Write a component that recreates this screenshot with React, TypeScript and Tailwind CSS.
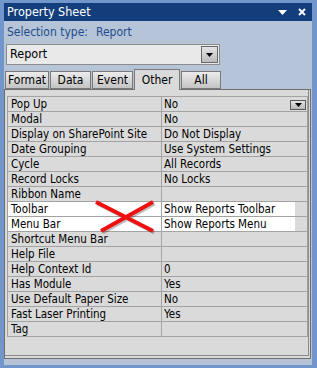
import { ReactNode } from 'react';

const font = { fontFamily: '"DejaVu Sans Condensed", "Liberation Sans", sans-serif' };

interface RowProps {
  label: string;
  value?: string;
  highlight?: boolean;
  dropdown?: boolean;
}

const rows: RowProps[] = [
  { label: 'Pop Up', value: 'No', dropdown: true },
  { label: 'Modal', value: 'No' },
  { label: 'Display on SharePoint Site', value: 'Do Not Display' },
  { label: 'Date Grouping', value: 'Use System Settings' },
  { label: 'Cycle', value: 'All Records' },
  { label: 'Record Locks', value: 'No Locks' },
  { label: 'Ribbon Name', value: '' },
  { label: 'Toolbar', value: 'Show Reports Toolbar', highlight: true },
  { label: 'Menu Bar', value: 'Show Reports Menu', highlight: true },
  { label: 'Shortcut Menu Bar', value: '' },
  { label: 'Help File', value: '' },
  { label: 'Help Context Id', value: '0' },
  { label: 'Has Module', value: 'Yes' },
  { label: 'Use Default Paper Size', value: 'No' },
  { label: 'Fast Laser Printing', value: 'Yes' },
  { label: 'Tag', value: '' },
];

function Row({ label, value, highlight, dropdown }: RowProps) {
  return (
    <div className="grid grid-cols-[154px_1fr] h-[15px] border-b border-[#a3a3a3]">
      <div className={`border-r border-[#a3a3a3] pl-[3px] leading-[14px] whitespace-nowrap ${highlight ? 'bg-white' : ''}`}>
        {label}
      </div>
      <div className="relative h-[14px]">
        <div className={`h-full pl-[2px] leading-[14px] whitespace-nowrap ${highlight ? 'bg-white w-[133px]' : ''}`}>
          {value}
        </div>
        {dropdown && (
          <div className="absolute right-[1px] top-[3px] w-[16px] h-[10px] border border-[#5a5a5a] bg-gradient-to-b from-[#e4e4e4] to-[#b8b8b8] flex items-center justify-center">
            <svg width="7" height="4" viewBox="0 0 7 4">
              <path d="M0 0h7L3.5 4z" fill="#000" />
            </svg>
          </div>
        )}
      </div>
    </div>
  );
}

function Tab({ children, w, active }: { children: ReactNode; w: string; active?: boolean }) {
  if (active) {
    return (
      <div className={`${w} h-[21px] -mb-[1px] relative z-10 border border-b-0 border-[#7a7a7a] bg-[#dadada] flex items-center justify-center text-[12px]`}>
        {children}
      </div>
    );
  }
  return (
    <div className={`${w} h-[18px] border border-[#7a7a7a] bg-gradient-to-b from-[#ececec] to-[#c4c4c4] flex items-center justify-center text-[12px]`}>
      {children}
    </div>
  );
}

export default function App() {
  return (
    <div className="w-[317px] h-[368px] bg-[#7096cb] pt-[3px] pl-[4px] pr-[5px] pb-[3px] text-black text-[11.5px]" style={font}>
      <div className="h-full flex flex-col bg-[#b5c5d7]">
        {/* Title bar */}
        <div className="h-[18px] bg-[#133e7b] flex items-center pl-[3px] pr-[6px] text-white text-[12.5px]">
          <span className="flex-1">Property Sheet</span>
          <svg width="9" height="5" viewBox="0 0 9 5" className="mr-[11px]">
            <path d="M0 0h9L4.5 5z" fill="#fff" />
          </svg>
          <svg width="8" height="8" viewBox="0 0 8 8">
            <path d="M1 1l6 6M7 1L1 7" stroke="#fff" strokeWidth="1.8" />
          </svg>
        </div>

        {/* Selection type */}
        <div className="h-[17px] mt-[2px] pl-[3px] flex items-center gap-[8px] text-[12px] text-[#1f4c8c]">
          <span>Selection type:</span>
          <span>Report</span>
        </div>

        {/* Combo box */}
        <div className="ml-[2px] mt-[4px] w-[214px] h-[21px] border border-[#8c8c8c] bg-[#e9e9e9] flex items-center pl-[3px] pr-[1px] text-[12.5px]">
          <span className="flex-1">Report</span>
          <div className="w-[17px] h-[17px] border border-[#6a6a6a] bg-gradient-to-b from-[#e2e2e2] to-[#bdbdbd] flex items-center justify-center">
            <svg width="7" height="4" viewBox="0 0 7 4">
              <path d="M0 0h7L3.5 4z" fill="#000" />
            </svg>
          </div>
        </div>

        {/* Tabs */}
        <div className="flex items-end gap-[1px] pl-[1px] mt-[4px]">
          <Tab w="w-[44px]">Format</Tab>
          <Tab w="w-[41px]">Data</Tab>
          <Tab w="w-[41px]">Event</Tab>
          <Tab w="w-[46px]" active>Other</Tab>
          <Tab w="w-[40px]">All</Tab>
        </div>

        {/* Property grid panel */}
        <div className="relative w-[307px] h-[270px] border border-[#6e6e6e] bg-[#dadada] pt-[6px] pl-[2px] pr-[2px] shadow-[inset_-1px_-2px_0_#dadada,inset_-2px_-3px_0_#8a8a8a]">
          <div className="border border-b-0 border-[#a3a3a3]">
            {rows.map((r) => (
              <Row key={r.label} {...r} />
            ))}
          </div>
          <svg width="61" height="33" viewBox="0 0 61 33" className="absolute left-[89px] top-[110px] overflow-visible">
            <g stroke="#00000040" strokeWidth="4" transform="translate(1.5 1.5)">
              <path d="M2 2L59 31M59 2L7 31" />
            </g>
            <g stroke="#f01010" strokeWidth="4">
              <path d="M2 2L59 31M59 2L7 31" />
            </g>
          </svg>
        </div>
      </div>
    </div>
  );
}
